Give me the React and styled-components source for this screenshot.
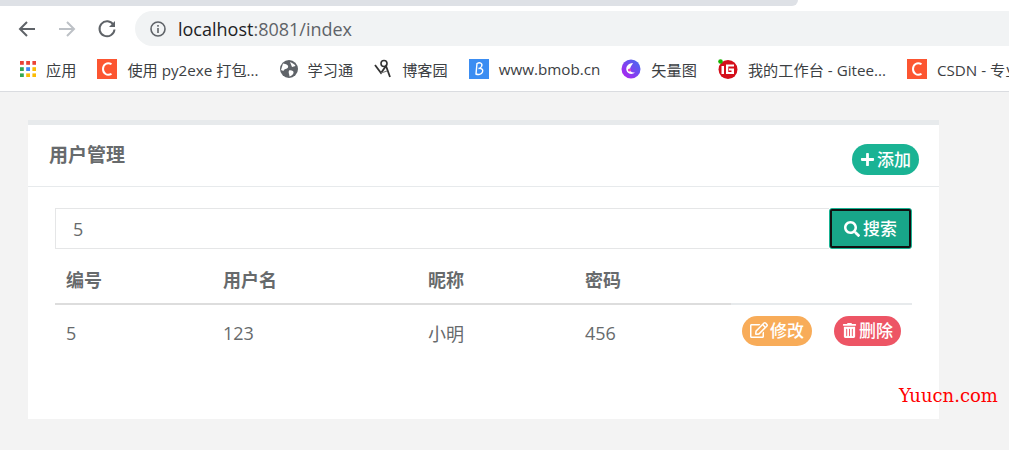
import React from 'react'
import styled, { createGlobalStyle } from 'styled-components'
import { FaPlus, FaSearch, FaRegEdit, FaTrashAlt } from 'react-icons/fa'

const cjk = '"Open Sans", "Noto Sans CJK SC", sans-serif'

const Global = createGlobalStyle`
  html, body { margin: 0; padding: 0; }
  body { background: #f3f3f3; font-family: ${cjk}; overflow: hidden; }
  * { box-sizing: border-box; }
`

const AppsIcon = () => {
  const colors = ['#ea4335', '#ea4335', '#ea4335', '#34a853', '#4285f4', '#fbbc05', '#34a853', '#fbbc05', '#fbbc05']
  return (
    <svg width="16" height="16" viewBox="0 0 16 16">
      {colors.map((c, i) => (
        <rect key={i} x={(i % 3) * 6.2} y={Math.floor(i / 3) * 6.2} width="3.8" height="3.8" fill={c} />
      ))}
    </svg>
  )
}

const CsdnIcon = () => (
  <svg width="20" height="20" viewBox="0 0 20 20">
    <rect width="20" height="20" fill="#fc5531" />
    <path d="M14.5 5.2 C10 2.8 6 5.5 6 10 C6 14.5 10 17.2 14.5 14.8" fill="none" stroke="#fff" strokeWidth="2" />
  </svg>
)

const GlobeIcon = () => (
  <svg width="18" height="18" viewBox="0 0 18 18">
    <circle cx="9" cy="9" r="9" fill="#5f6368" />
    <path d="M3 3.5 C6 4 9 5 8 7.5 C7 9.5 4 8.500 3.500 11 L1 10 Z M10 2 C12 3 15 4 15.500 6 L12 7 Z M9 10.500 C11.500 10 14 11 13.500 13 C13 15 11 16 9.500 16.500 C9.500 14.500 8 12.500 9 10.500 Z" fill="#fff" />
  </svg>
)

const CnblogsIcon = () => (
  <svg width="18" height="20" viewBox="0 0 18 20">
    <circle cx="10" cy="4.500" r="3" fill="none" stroke="#333" strokeWidth="1.600" />
    <path d="M1 6 L7 14 L12 7 L16 18" fill="none" stroke="#333" strokeWidth="1.800" />
    <path d="M7 14 L13 12" fill="none" stroke="#777" strokeWidth="1.200" />
  </svg>
)

const BmobIcon = () => (
  <svg width="20" height="20" viewBox="0 0 20 20">
    <rect width="20" height="20" fill="#3b8df2" />
    <path d="M7 15 L8 4.500 C11 2.800 14 4.500 12.500 7.500 C11.800 8.800 10.500 9.500 9.500 9.500 C12.500 9 14.500 10.500 13.500 13 C12.500 15.500 9 16 7 15 Z" fill="none" stroke="#fff" strokeWidth="1.400" />
  </svg>
)

const VectorIcon = () => (
  <svg width="20" height="20" viewBox="0 0 20 20">
    <defs>
      <linearGradient id="vec" x1="0" y1="1" x2="1" y2="0">
        <stop offset="0" stopColor="#b81cf0" />
        <stop offset="1" stopColor="#3d6ff0" />
      </linearGradient>
    </defs>
    <circle cx="10" cy="10" r="9.500" fill="url(#vec)" />
    <path d="M12 4 C7 4 4.500 8 5.500 11.500 C6.500 15 11.500 16 14 13.500 C11 14 8.500 12.500 9 10 C9.500 7.500 11 6 12 4 Z" fill="#fff" />
    <circle cx="8.500" cy="11" r="1.600" fill="#e040c0" />
  </svg>
)

const GiteeIcon = () => (
  <svg width="20" height="20" viewBox="0 0 20 20">
    <circle cx="10" cy="10.500" r="9.500" fill="#d40f1b" />
    <circle cx="2.500" cy="2.500" r="2.300" fill="#16b400" />
    <path d="M3.500 7 H6 V15 H3.500 Z" fill="#fff" />
    <path d="M16 5.500 H8 V15 H16 V9.500 H11 V11.500 H13.500 V13 H10.300 V7.500 H16 Z" fill="#fff" />
  </svg>
)

const bookmarks = [
  { icon: <AppsIcon />, label: '应用' },
  { icon: <CsdnIcon />, label: '使用 py2exe 打包...' },
  { icon: <GlobeIcon />, label: '学习通' },
  { icon: <CnblogsIcon />, label: '博客园' },
  { icon: <BmobIcon />, label: 'www.bmob.cn' },
  { icon: <VectorIcon />, label: '矢量图' },
  { icon: <GiteeIcon />, label: '我的工作台 - Gitee...' },
  { icon: <CsdnIcon />, label: 'CSDN - 专业开发者社区' },
]

const users = [{ id: 5, username: '123', nickname: '小明', password: '456' }]

export default function App() {
  return (
    <Page>
      <Global />
      <Browser>
        <TabStrip />
        <Toolbar>
          <NavButton>
            <svg width="20" height="20" viewBox="0 0 20 20" fill="none" stroke="#5f6368" strokeWidth="2">
              <path d="M18 10 H3 M10 3 L3 10 L10 17" />
            </svg>
          </NavButton>
          <NavButton>
            <svg width="20" height="20" viewBox="0 0 20 20" fill="none" stroke="#bdc1c6" strokeWidth="2">
              <path d="M2 10 H17 M10 3 L17 10 L10 17" />
            </svg>
          </NavButton>
          <NavButton>
            <svg width="20" height="20" viewBox="0 0 20 20" fill="none">
              <path d="M16.500 6 A7.500 7.500 0 1 0 17.500 10.500" stroke="#5f6368" strokeWidth="2" />
              <path d="M18 2 V8 H12 Z" fill="#5f6368" />
            </svg>
          </NavButton>
          <AddressBar>
            <svg width="16" height="16" viewBox="0 0 16 16" fill="none">
              <circle cx="8" cy="8" r="7" stroke="#5f6368" strokeWidth="1.600" />
              <rect x="7.200" y="7" width="1.600" height="5" fill="#5f6368" />
              <rect x="7.200" y="4" width="1.600" height="1.700" fill="#5f6368" />
            </svg>
            <Url>
              <Host>localhost</Host>:8081/index
            </Url>
          </AddressBar>
        </Toolbar>
        <Bookmarks>
          {bookmarks.map((b) => (
            <Bookmark key={b.label}>
              {b.icon}
              <span>{b.label}</span>
            </Bookmark>
          ))}
        </Bookmarks>
      </Browser>

      <Content>
        <Card>
          <CardHeader>
            <CardTitle>用户管理</CardTitle>
            <Pill $color="#1ab394" $width="67px" $height="31px">
              <FaPlus size={15} />
              添加
            </Pill>
          </CardHeader>
          <CardBody>
            <SearchRow>
              <SearchInput defaultValue="5" />
              <SearchButton>
                <FaSearch size={16} />
                <ButtonLabel>搜索</ButtonLabel>
              </SearchButton>
            </SearchRow>
            <Table>
              <thead>
                <tr>
                  <Th $w="157px">编号</Th>
                  <Th $w="205px">用户名</Th>
                  <Th $w="157px">昵称</Th>
                  <Th $w="157px">密码</Th>
                  <Th $w="181px" $light />
                </tr>
              </thead>
              <tbody>
                {users.map((u) => (
                  <tr key={u.id}>
                    <Td>{u.id}</Td>
                    <Td>{u.username}</Td>
                    <Td>{u.nickname}</Td>
                    <Td>{u.password}</Td>
                    <Td>
                      <Actions>
                        <Pill $color="#f8ac59" $width="70px" $height="30px">
                          <FaRegEdit size={18} />
                          修改
                        </Pill>
                        <Pill $color="#ed5565" $width="67px" $height="30px">
                          <FaTrashAlt size={15} />
                          删除
                        </Pill>
                      </Actions>
                    </Td>
                  </tr>
                ))}
              </tbody>
            </Table>
          </CardBody>
        </Card>
      </Content>
      <Watermark>Yuucn.com</Watermark>
    </Page>
  )
}

const Page = styled.div`
  position: relative;
  width: 1009px;
  height: 450px;
  overflow: hidden;
`

const Browser = styled.div`
  background: #fff;
  border-bottom: 1px solid #dadce0;
  height: 92px;
`

const TabStrip = styled.div`
  width: 798px;
  height: 6px;
  background: #dee1e6;
  border-bottom-right-radius: 8px;
`

const Toolbar = styled.div`
  display: flex;
  align-items: center;
  height: 40px;
  padding: 5px 0 0 17px;
`

const NavButton = styled.div`
  display: flex;
  align-items: center;
  justify-content: center;
  width: 20px;
  height: 20px;
  margin-right: 20px;
`

const AddressBar = styled.div`
  display: flex;
  flex: 1;
  align-items: center;
  gap: 12px;
  height: 35px;
  margin-left: -2px;
  padding-left: 15px;
  background: #f1f3f4;
  border-radius: 18px 0 0 18px;
`

const Url = styled.div`
  font-size: 18px;
  color: #5f6368;
`

const Host = styled.span`
  color: #202124;
`

const Bookmarks = styled.div`
  display: flex;
  align-items: center;
  gap: 21px;
  height: 45px;
  padding-left: 20px;
  overflow: hidden;
`

const Bookmark = styled.div`
  display: flex;
  flex-shrink: 0;
  align-items: center;
  gap: 10px;
  font-size: 15.2px;
  color: #3c4043;
  white-space: nowrap;
`

const Content = styled.div`
  padding: 28px 70px 0 28px;
`

const Card = styled.div`
  height: 299px;
  background: #fff;
  border-top: 5px solid #e7eaec;
`

const CardHeader = styled.div`
  display: flex;
  justify-content: space-between;
  height: 62px;
  padding: 18px 20px 0 21px;
  border-bottom: 1px solid #e7eaec;
`

const CardTitle = styled.h5`
  margin: 0;
  font-size: 19px;
  line-height: 24px;
  font-weight: 700;
  color: #676a6c;
`

const Pill = styled.button`
  display: inline-flex;
  align-items: center;
  justify-content: center;
  gap: 2px;
  width: ${(p) => p.$width};
  height: ${(p) => p.$height};
  margin-top: ${(p) => (p.$height === '31px' ? '1px' : '0')};
  padding: 0 0 3px;
  background: ${(p) => p.$color};
  border: none;
  border-radius: 16px;
  font-family: inherit;
  font-size: 17px;
  font-weight: 500;
  color: #fff;
  svg {
    margin-top: 2px;
  }
`

const CardBody = styled.div`
  padding: 21px 27px 0;
`

const SearchRow = styled.div`
  display: flex;
  height: 41px;
`

const SearchInput = styled.input`
  flex: 1;
  min-width: 0;
  padding: 0 17px;
  background: #fff;
  border: 1px solid #e5e6e7;
  border-right: none;
  font-family: inherit;
  font-size: 18px;
  color: #676a6c;
  outline: none;
`

const SearchButton = styled.button`
  display: flex;
  align-items: center;
  justify-content: center;
  gap: 3px;
  width: 83px;
  padding: 0;
  background: #18a689;
  border: 1px solid #1ab394;
  outline: 2px solid #111;
  outline-offset: -3px;
  border-radius: 3px;
  font-family: inherit;
  font-size: 17px;
  font-weight: 500;
  color: #fff;
`

const ButtonLabel = styled.span`
  margin-top: -3px;
`

const Table = styled.table`
  width: 857px;
  border-collapse: collapse;
  table-layout: fixed;
`

const Th = styled.th`
  width: ${(p) => p.$w};
  height: 55px;
  padding: 5px 11px 0;
  border-bottom: 2px solid ${(p) => (p.$light ? '#e7eaec' : '#dddddd')};
  text-align: left;
  font-size: 18px;
  font-weight: 700;
  color: #676a6c;
`

const Td = styled.td`
  height: 60px;
  padding: 0 11px 4px;
  font-size: 18px;
  color: #676a6c;
`

const Actions = styled.div`
  display: flex;
  gap: 22px;
  margin-top: -4px;
`

const Watermark = styled.div`
  position: absolute;
  left: 899px;
  top: 385px;
  font-family: "DejaVu Serif", serif;
  font-size: 18px;
  line-height: 22px;
  color: #ff0000;
  white-space: nowrap;
`
